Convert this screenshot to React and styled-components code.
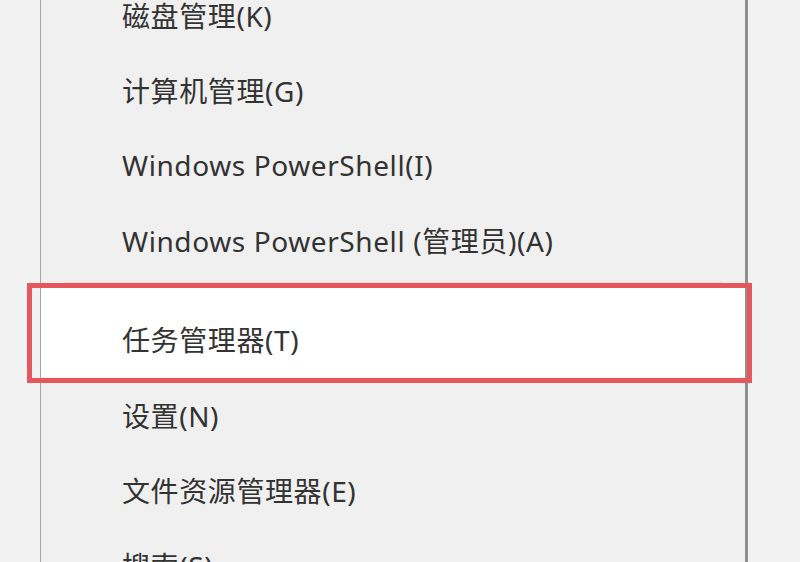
import React from 'react'
import styled, { createGlobalStyle } from 'styled-components'

const Global = createGlobalStyle`
  html, body {
    margin: 0;
    padding: 0;
    background: #f1f1f1;
  }
  #root {
    height: 562px;
    overflow: hidden;
  }
`

const Screen = styled.div`
  position: relative;
  display: flex;
  width: 800px;
  height: 562px;
  overflow: hidden;
  background: #f1f1f1;
`

const Gutter = styled.div`
  width: ${props => props.width}px;
  flex-shrink: 0;
  background: #f2f2f2;
`

const Menu = styled.div`
  width: 704px;
  flex-shrink: 0;
  background: #f0f0f0;
  border-left: 1px solid #a6a6a6;
  border-right: 3px solid #8f8f8f;
  overflow: hidden;
`

const List = styled.ul`
  list-style: none;
  margin: -23px 0 0;
  padding: 0;
`

const Item = styled.li`
  display: flex;
  align-items: center;
  height: ${props => props.tall ? 90 : 75}px;
  padding: ${props => props.tall ? '14px 0 0' : '0'};
  box-sizing: border-box;
  padding-left: 81px;
  background: ${props => props.hover ? '#ffffff' : 'transparent'};
  color: #333333;
  font-family: "Noto Sans", "Noto Sans CJK SC", sans-serif;
  font-size: 28px;
  letter-spacing: 0.6px;
  white-space: nowrap;
`

const Separator = styled.li`
  height: 10px;
  display: flex;
  align-items: center;
  padding: 0 23px;

  &::after {
    content: '';
    flex: 1;
    height: 1px;
    background: #dadada;
  }
`

const Highlight = styled.div`
  position: absolute;
  left: 27px;
  top: 283px;
  width: 725px;
  height: 100px;
  box-sizing: border-box;
  border: 5px solid #e4585d;
  pointer-events: none;
`

const top = ['磁盘管理(K)', '计算机管理(G)', 'Windows PowerShell(I)', 'Windows PowerShell (管理员)(A)']
const bottom = ['设置(N)', '文件资源管理器(E)', '搜索(S)']

export default function App() {
  return (
    <>
      <Global />
      <Screen>
        <Gutter width={40} />
        <Menu>
          <List>
            {top.map(label => <Item key={label}>{label}</Item>)}
            <Separator />
            <Item tall hover>任务管理器(T)</Item>
            {bottom.map(label => <Item key={label}>{label}</Item>)}
          </List>
        </Menu>
        <Gutter width={52} />
        <Highlight />
      </Screen>
    </>
  )
}
